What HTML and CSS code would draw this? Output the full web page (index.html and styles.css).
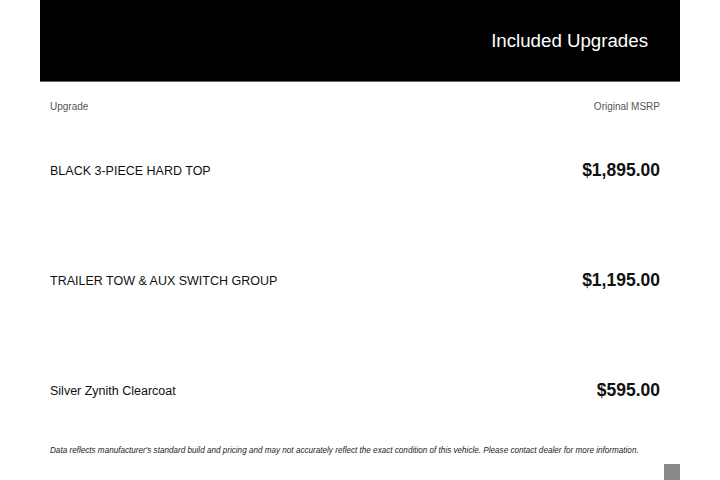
FILE: index.html
```html
<!DOCTYPE html>
<html>
<head>
<meta charset="utf-8">
<link rel="stylesheet" href="styles.css">
</head>
<body>
<div class="page">
  <header class="header"><h1 class="title">Included Upgrades</h1></header>
  <div class="labels"><span>Upgrade</span><span>Original MSRP</span></div>
  <div class="rows">
    <div class="row"><span class="name">BLACK 3-PIECE HARD TOP</span><span class="price">$1,895.00</span></div>
    <div class="row"><span class="name">TRAILER TOW &amp; AUX SWITCH GROUP</span><span class="price">$1,195.00</span></div>
    <div class="row"><span class="name">Silver Zynith Clearcoat</span><span class="price">$595.00</span></div>
  </div>
  <p class="note">Data reflects manufacturer's standard build and pricing and may not accurately reflect the exact condition of this vehicle. Please contact dealer for more information.</p>
  <div class="corner"></div>
</div>
</body>
</html>
```
FILE: styles.css
```css
html, body { margin: 0; padding: 0; background: #fff; }
body { font-family: "Liberation Sans", Arial, sans-serif; }
.page { position: relative; width: 640px; height: 480px; margin: 0 auto; }
.header {
  height: 81px; background: #000; border-bottom: 1px solid #666;
  display: flex; align-items: center; justify-content: flex-end;
  padding-right: 32px;
}
.title { margin: 0; color: #fff; font-weight: normal; font-size: 18.7px; line-height: 22px; }
.labels {
  display: flex; justify-content: space-between;
  padding: 18px 20px 0 10px; height: 15px;
  font-size: 10px; line-height: 13px; color: #555;
}
.rows { display: flex; flex-direction: column; }
.row {
  height: 110px; display: flex; align-items: center; justify-content: space-between;
  padding: 1px 20px 0 10px; box-sizing: border-box;
}
.name { font-size: 12.5px; color: #111; }
.price { font-size: 17.5px; font-weight: bold; color: #111; }
.note {
  margin: 0; padding: 0 10px; font-size: 8.15px; line-height: 12px;
  font-style: italic; color: #222; white-space: nowrap;
}
.corner { position: absolute; right: 0; bottom: 0; width: 16px; height: 16px; background: #888; }
```
